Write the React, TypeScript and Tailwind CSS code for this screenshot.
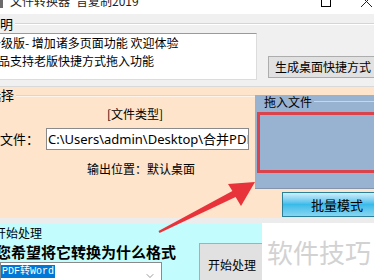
import { ChevronDown } from 'lucide-react';

export default function App() {
  return (
    <div className="relative w-[374px] h-[280px] overflow-hidden flex flex-col bg-[#f0f0f0] text-black font-['Noto_Sans_CJK_SC','Noto_Sans',sans-serif]">
      {/* title bar, cut off at the top */}
      <div className="h-[14px] shrink-0 bg-white flex items-start overflow-hidden">
        <div className="w-[3px] h-[8px] bg-[#6b6b6b]" />
        <span className="ml-[7px] -mt-[7px] text-[12px] leading-[16px] text-[#222] whitespace-nowrap">文件转换器</span>
        <span className="ml-[6px] -mt-[7px] text-[12px] leading-[16px] text-[#222] whitespace-nowrap">音夏制2019</span>
        <div className="ml-auto w-[10px] h-[7px] border border-t-0 border-black" />
        <svg className="ml-[29px] mr-[1px]" width="13" height="8" viewBox="0 0 13 8">
          <path d="M1 -4 L12 7 M12 -4 L1 7" stroke="#222" strokeWidth="1" fill="none" />
        </svg>
      </div>

      {/* 说明 */}
      <div className="h-[73px] shrink-0 pt-[3px] border-b border-[#d9d9d9]">
        <div className="flex items-center h-[14px]">
          <span className="-ml-[13px] text-[13px] leading-[14px] whitespace-nowrap">说明</span>
          <div className="flex-1 ml-[2px] border-t border-[#d5d5d5] border-b border-b-white" />
        </div>
        <div className="flex items-start mt-[2px]">
          <div className="w-[257px] h-[47px] shrink-0 bg-white border-t border-t-[#9a9a9a] border-r border-r-[#dcdcdc] border-b border-b-[#dcdcdc] text-[12px] leading-[18px] overflow-hidden">
            <div className="-ml-[11px] whitespace-nowrap">升级版- 增加诸多页面功能 欢迎体验</div>
            <div className="-ml-[14px] whitespace-nowrap">本品支持老版快捷方式拖入功能</div>
          </div>
          <button className="ml-[11px] mt-[23px] h-[22px] flex-1 bg-[#e1e1e1] border border-[#adadad] border-r-0 pl-[6px] text-left text-[12px] leading-[20px] whitespace-nowrap">
            生成桌面快捷方式
          </button>
        </div>
      </div>

      {/* 选择 */}
      <div className="h-[131px] shrink-0 flex bg-[#fee4ca]">
        <div className="w-[255px] shrink-0">
          <div className="flex items-center h-[13px] mt-[1px]">
            <span className="-ml-[12px] text-[13px] leading-[13px] whitespace-nowrap">选择</span>
            <div className="flex-1 ml-[2px] mt-[3px] border-t border-[#ecd2bd] border-b border-b-[#fff4ea]" />
          </div>
          <div className="mt-[6px] pl-[107px] text-[12px] leading-[14px]">[文件类型]</div>
          <div className="mt-[7px] flex items-center h-[22px]">
            <span className="w-[46px] shrink-0 text-[13px] leading-[16px] whitespace-nowrap">文件：</span>
            <div className="w-[203px] h-[22px] bg-white border border-[#8a8a8a] pl-[1px] overflow-hidden whitespace-nowrap text-[13px] leading-[20px] font-['Noto_Sans','Noto_Sans_CJK_SC',sans-serif]">
              C:\Users\admin\Desktop\合并PDF文件
            </div>
          </div>
          <div className="mt-[12px] pl-[87px] text-[12px] leading-[14px] whitespace-nowrap">输出位置：默认桌面</div>
        </div>
        <div className="flex-1 flex flex-col">
          <div className="mt-[8px] h-[94px] bg-[#98b2d1] border-b border-[#8494ab] flex flex-col">
            <div className="flex items-center h-[13px]">
              <span className="ml-[9px] text-[12px] leading-[13px] whitespace-nowrap">拖入文件</span>
              <div className="flex-1 ml-[2px] border-t border-[#c9d6e6]" />
            </div>
            <div className="mt-[4px] ml-[2px] h-[61px] border-[3px] border-r-0 border-[#d9434b]" />
          </div>
          <button className="mt-[3px] ml-[27px] h-[25px] border border-[#2c7f98] border-r-0 bg-gradient-to-b from-[#cdeffa] via-[#38bbe9] to-[#86d6f1] pl-[28px] text-left text-[13px] leading-[23px] whitespace-nowrap">
            批量模式
          </button>
        </div>
      </div>

      {/* 开始处理 */}
      <div className="flex-1 flex">
        <div className="w-[262px] shrink-0 flex flex-col">
          <div className="h-[6px] bg-[#ececec]" />
          <div className="flex-1 bg-[#c2fcfd]">
            <div className="-ml-[6px] mt-[3px] text-[12px] leading-[12px] whitespace-nowrap">开始处理</div>
            <div className="flex mt-[4px]">
              <div className="w-[199px] shrink-0">
                <div className="-ml-[4px] text-[15px] leading-[17px] font-bold whitespace-nowrap">您希望将它转换为什么格式</div>
                <div className="mt-[2px] w-[162px] h-[22px] bg-white border border-[#8a8a8a] flex items-start pt-[2px]">
                  <span className="bg-[#0078d7] text-white text-[10px] leading-[13px] px-[1px] font-['Liberation_Mono','Noto_Sans_CJK_SC',monospace] whitespace-nowrap">PDF转Word</span>
                  <ChevronDown className="ml-auto mr-[5px] mt-[5px] text-[#555]" size={12} strokeWidth={1.2} />
                </div>
              </div>
              <button className="w-[63px] h-[40px] bg-[#e1e1e1] border border-[#adadad] border-r-0 flex items-start pt-[13px] pl-[8px] text-[12px] leading-[16px] whitespace-nowrap">
                开始处理
              </button>
            </div>
          </div>
        </div>
        <div className="flex-1 flex flex-col">
          <div className="h-[5px] bg-[#ececec]" />
          <div className="flex-1 bg-white pt-[14px] pl-[5px] text-[26px] leading-[30px] text-[#d2d2d2] whitespace-nowrap">软件技巧</div>
        </div>
      </div>

      {/* red arrow annotation */}
      <svg className="absolute left-0 top-0 pointer-events-none" width="374" height="280" viewBox="0 0 374 280">
        <polygon
          points="158.5,231.1 232.4,190.9 228,184 255,182 241,206 235.6,197.1 159.5,232.9"
          fill="#e8333a"
        />
      </svg>
    </div>
  );
}
